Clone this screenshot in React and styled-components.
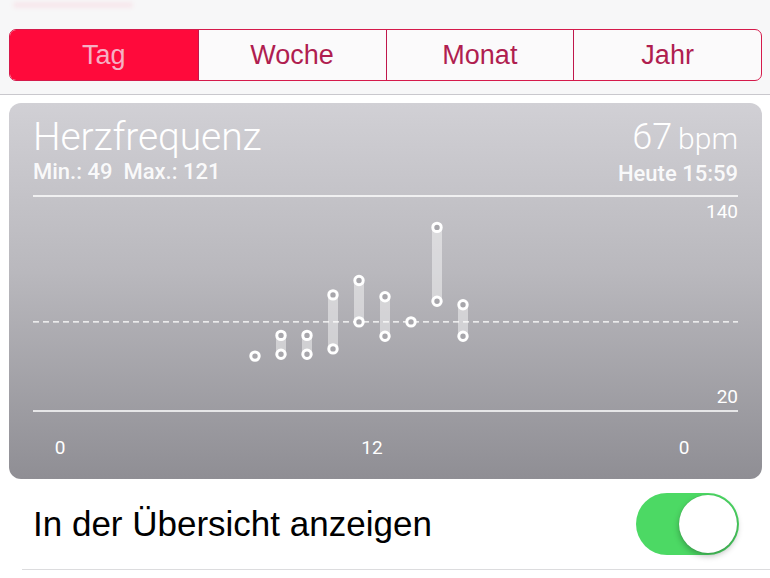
import styled, { createGlobalStyle } from 'styled-components';

const GlobalStyle = createGlobalStyle`
  * { box-sizing: border-box; }
  html, body { margin: 0; padding: 0; background: #ffffff; }
  body { font-family: "Liberation Sans", Arial, sans-serif; }
`;

const Page = styled.div`
  width: 770px;
  height: 578px;
  overflow: hidden;
  background: #ffffff;
`;

const TopBar = styled.header`
  background: #f7f7f8;
  padding: 2px 8px 13px 9px;
  border-bottom: 1px solid #c9c8cd;
`;

const Smear = styled.div`
  width: 120px;
  height: 6px;
  margin: 0 0 21px 4px;
  border-radius: 3px;
  background: rgba(255, 30, 80, 0.07);
  filter: blur(2px);
`;

const Segmented = styled.nav`
  display: grid;
  grid-template-columns: repeat(4, 1fr);
  height: 52px;
  border: 1.5px solid #d51a4b;
  border-radius: 7px;
  overflow: hidden;
  background: #fbfafb;
`;

const Segment = styled.div`
  display: flex;
  align-items: center;
  justify-content: center;
  font-size: 27px;
  color: ${p => (p.active ? '#f6b0c3' : '#b01e50')};
  background: ${p => (p.active ? '#ff0a3b' : 'transparent')};
  & + & {
    border-left: 1.5px solid #c0174b;
  }
`;

const Content = styled.main`
  padding: 8px 8px 0 9px;
`;

const Card = styled.section`
  height: 376px;
  border-radius: 12px;
  padding: 15px 24px 0 24px;
  background: linear-gradient(180deg, #d1d0d5 0%, #b9b8bd 45%, #8f8e94 100%);
  color: #ffffff;
  overflow: hidden;
`;

const CardHeader = styled.div`
  display: flex;
  justify-content: space-between;
  align-items: flex-start;
  height: 77px;
`;

const Column = styled.div`
  display: flex;
  flex-direction: column;
  align-items: ${p => (p.right ? 'flex-end' : 'flex-start')};
`;

const Title = styled.h1`
  margin: 0;
  font-family: Roboto, "Liberation Sans", sans-serif;
  font-weight: 300;
  font-size: 39px;
  line-height: 38px;
  letter-spacing: -0.1px;
`;

const Reading = styled.div`
  font-family: Roboto, "Liberation Sans", sans-serif;
  font-weight: 300;
  line-height: 38px;
  display: flex;
  align-items: baseline;
  gap: 6px;
`;

const Value = styled.span`
  font-size: 36px;
`;

const Unit = styled.span`
  font-size: 30px;
`;

const SubLine = styled.div`
  margin-top: 5px;
  font-family: Roboto, "Liberation Sans", sans-serif;
  font-weight: 500;
  font-size: 22px;
  line-height: 22px;
  white-space: pre;
  color: rgba(255, 255, 255, 0.93);
`;

const Chart = styled.svg`
  display: block;
  width: 705px;
  height: 284px;
  font-family: Roboto, "Liberation Sans", sans-serif;
  font-weight: 400;
`;

const Row = styled.div`
  display: flex;
  align-items: center;
  justify-content: space-between;
  height: 91px;
  margin-left: 22px;
  padding: 0 31px 0 11px;
  border-bottom: 1.5px solid #dcdcde;
`;

const Label = styled.span`
  font-size: 35px;
  color: #000000;
`;

const Toggle = styled.div`
  width: 103px;
  height: 62px;
  border-radius: 31px;
  background: #4cd964;
  display: flex;
  justify-content: flex-end;
  align-items: center;
  padding: 2px;
`;

const Knob = styled.div`
  width: 58px;
  height: 58px;
  border-radius: 50%;
  background: #ffffff;
  box-shadow: 0 3px 6px rgba(0, 0, 0, 0.28), 0 0 1px rgba(0, 0, 0, 0.2);
`;

// bpm -> y in the chart (140 at top line, 20 at bottom line)
const yOf = bpm => (140 - bpm) * 1.8;
const xOf = hour => 27 + 26 * hour;

const readings = [
  { h: 7.5, lo: 50.5 },
  { h: 8.5, hi: 62, lo: 51.5 },
  { h: 9.5, hi: 62, lo: 51.5 },
  { h: 10.5, hi: 84.5, lo: 54.5 },
  { h: 11.5, hi: 92.5, lo: 69.5 },
  { h: 12.5, hi: 83.5, lo: 61.5 },
  { h: 13.5, lo: 69.5 },
  { h: 14.5, hi: 122, lo: 81 },
  { h: 15.5, hi: 79, lo: 61.5 },
];

function Dot({ x, y }) {
  return <circle cx={x} cy={y} r="4.2" fill="#a7a6ab" stroke="#ffffff" strokeWidth="3" />;
}

function HeartChart() {
  return (
    <Chart viewBox="0 0 705 284">
      <line x1="0" y1="1" x2="705" y2="1" stroke="#fff" strokeWidth="1.5" />
      <text x="705" y="23" fill="#fff" fontSize="19" textAnchor="end">140</text>
      <line x1="0" y1={yOf(69.5)} x2="705" y2={yOf(69.5)} stroke="#fff" strokeWidth="1.3" strokeDasharray="6 4" />
      {readings.map(r => {
        const x = xOf(r.h);
        return (
          <g key={r.h}>
            {r.hi && (
              <rect x={x - 5} y={yOf(r.hi)} width="10" height={yOf(r.lo) - yOf(r.hi)} rx="2" fill="rgba(255,255,255,0.45)" />
            )}
            {r.hi && <Dot x={x} y={yOf(r.hi)} />}
            <Dot x={x} y={yOf(r.lo)} />
          </g>
        );
      })}
      <text x="705" y="208" fill="#fff" fontSize="19" textAnchor="end">20</text>
      <line x1="0" y1="216" x2="705" y2="216" stroke="#fff" strokeWidth="1.5" />
      <text x={xOf(0)} y="259" fill="#fff" fontSize="19" textAnchor="middle">0</text>
      <text x={xOf(12)} y="259" fill="#fff" fontSize="19" textAnchor="middle">12</text>
      <text x={xOf(24)} y="259" fill="#fff" fontSize="19" textAnchor="middle">0</text>
    </Chart>
  );
}

export default function App() {
  const ranges = ['Tag', 'Woche', 'Monat', 'Jahr'];
  return (
    <Page>
      <GlobalStyle />
      <TopBar>
        <Smear />
        <Segmented>
          {ranges.map((r, i) => (
            <Segment key={r} active={i === 0}>{r}</Segment>
          ))}
        </Segmented>
      </TopBar>
      <Content>
        <Card>
          <CardHeader>
            <Column>
              <Title>Herzfrequenz</Title>
              <SubLine>{'Min.: 49  Max.: 121'}</SubLine>
            </Column>
            <Column right>
              <Reading>
                <Value>67</Value>
                <Unit>bpm</Unit>
              </Reading>
              <SubLine>Heute 15:59</SubLine>
            </Column>
          </CardHeader>
          <HeartChart />
        </Card>
      </Content>
      <Row>
        <Label>In der Übersicht anzeigen</Label>
        <Toggle>
          <Knob />
        </Toggle>
      </Row>
    </Page>
  );
}
